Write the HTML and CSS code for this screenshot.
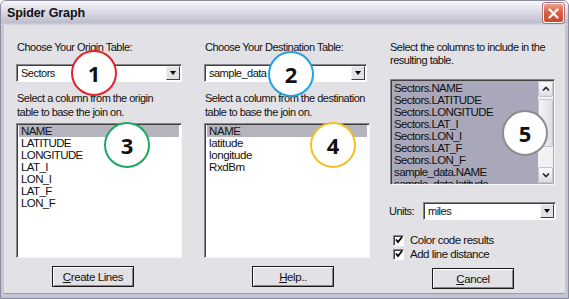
FILE: index.html
```html
<!DOCTYPE html>
<html lang="en">
<head>
  <meta charset="UTF-8">
  <title>Spider Graph</title>
  <link rel="stylesheet" href="styles.css">
</head>
<body>

  <div class="window">
    <!-- Barra de título -->
    <div class="titlebar">
      <span class="title">Spider Graph</span>
      <span class="close">
        <svg width="11" height="11" viewBox="0 0 11 11"><path d="M1.5 1.5 L9.5 9.5 M9.5 1.5 L1.5 9.5" stroke="#fff" stroke-width="2.2" stroke-linecap="round"/></svg>
      </span>
    </div>

    <div class="content">
      <!-- Tabela de origem -->
      <div class="col col-origin">
        <div class="label">Choose Your Origin Table:</div>
        <div class="combo"><span>Sectors</span><span class="drop"></span></div>
        <div class="desc">Select a column from the origin<br>table to base the join on.</div>
        <div class="listbox">
          <div class="item selected">NAME</div>
          <div class="item">LATITUDE</div>
          <div class="item">LONGITUDE</div>
          <div class="item">LAT_I</div>
          <div class="item">LON_I</div>
          <div class="item">LAT_F</div>
          <div class="item">LON_F</div>
        </div>
        <button class="btn btn-create"><u>C</u>reate Lines</button>
      </div>

      <!-- Tabela de destino -->
      <div class="col col-dest">
        <div class="label">Choose Your Destination Table:</div>
        <div class="combo combo-dest"><span>sample_data</span><span class="drop"></span></div>
        <div class="desc">Select a column from the destination<br>table to base the join on.</div>
        <div class="listbox">
          <div class="item selected">NAME</div>
          <div class="item">latitude</div>
          <div class="item">longitude</div>
          <div class="item">RxdBm</div>
        </div>
        <button class="btn btn-help"><u>H</u>elp..</button>
      </div>

      <!-- Colunas do resultado -->
      <div class="col col-result">
        <div class="label two">Select the columns to include in the<br>resulting table.</div>
        <div class="listbox multi">
          <div class="items">
            <div class="item">Sectors.NAME</div>
            <div class="item">Sectors.LATITUDE</div>
            <div class="item">Sectors.LONGITUDE</div>
            <div class="item">Sectors.LAT_I</div>
            <div class="item">Sectors.LON_I</div>
            <div class="item">Sectors.LAT_F</div>
            <div class="item">Sectors.LON_F</div>
            <div class="item">sample_data.NAME</div>
            <div class="item">sample_data.latitude</div>
          </div>
          <div class="scrollbar">
            <span class="sb-btn">
              <svg width="8" height="6" viewBox="0 0 8 6"><path d="M1 4.5 L4 1.5 L7 4.5" fill="none" stroke="#222" stroke-width="1.6"/></svg>
            </span>
            <span class="sb-track"><span class="sb-thumb"></span></span>
            <span class="sb-btn">
              <svg width="8" height="6" viewBox="0 0 8 6"><path d="M1 1.5 L4 4.5 L7 1.5" fill="none" stroke="#222" stroke-width="1.6"/></svg>
            </span>
          </div>
        </div>
        <div class="units">
          <span>Units:</span>
          <div class="combo combo-units"><span>miles</span><span class="drop"></span></div>
        </div>
        <div class="checks">
          <label class="check"><span class="box"><svg width="8" height="8" viewBox="0 0 8 8"><path d="M1 3.5 L3 6 L7 1" fill="none" stroke="#000" stroke-width="1.8"/></svg></span>Color code results</label>
          <label class="check"><span class="box"><svg width="8" height="8" viewBox="0 0 8 8"><path d="M1 3.5 L3 6 L7 1" fill="none" stroke="#000" stroke-width="1.8"/></svg></span>Add line distance</label>
        </div>
        <button class="btn btn-cancel"><u>C</u>ancel</button>
      </div>
    </div>

    <!-- Marcadores numerados -->
    <div class="marker m1">1</div>
    <div class="marker m2">2</div>
    <div class="marker m3">3</div>
    <div class="marker m4">4</div>
    <div class="marker m5">5</div>
  </div>

</body>
</html>
```

FILE: styles.css
```css
/* Geral */
body {
  margin: 0;
  background: #fff;
  font-family: 'Liberation Sans', Arial, sans-serif;
}

.window {
  position: relative;
  width: 569px;
  height: 299px;
  box-sizing: border-box;
  background: #c4c4d2;
  border: 1px solid #8a8aa0;
  border-radius: 6px 6px 0 0;
  overflow: hidden;
}

/* Barra de título */
.titlebar {
  height: 24px;
  display: flex;
  align-items: center;
  justify-content: space-between;
  padding: 0 4px 0 6px;
  background: linear-gradient(#fbfbfd, #e6e6ee 25%, #cfcfdc 65%, #bdbdcd 90%, #d8d8e2);
}

.title {
  font-weight: bold;
  font-size: 12.5px;
  color: #111;
  letter-spacing: -0.1px;
}

.close {
  width: 21px;
  height: 20px;
  box-sizing: border-box;
  border: 1px solid #fff;
  border-radius: 3px;
  background: linear-gradient(#eea08e, #d8624a 45%, #c64a30);
  display: flex;
  align-items: center;
  justify-content: center;
  box-shadow: 0 0 0 1px #b0707a;
}

/* Área do diálogo */
.content {
  height: 269px;
  margin: 0 3px 4px 3px;
  box-sizing: border-box;
  background: #e2e1e6;
  padding: 16px 0 0 12px;
  display: flex;
  font-size: 11px;
  letter-spacing: -0.5px;
  color: #111;
  border-bottom: 1px solid #9a9aae;
}

.col {
  display: flex;
  flex-direction: column;
  width: 166px;
}

.col-dest {
  margin-left: 22px;
}

.col-result {
  margin-left: 18px;
  width: 168px;
}

.label {
  line-height: 13px;
  padding-left: 1px;
}

.label.two {
  padding-left: 2px;
}

.desc {
  margin-top: 9px;
  line-height: 14px;
  padding-left: 1px;
}

/* Combos */
.combo {
  margin-top: 10px;
  height: 18px;
  box-sizing: border-box;
  background: #fff;
  border: 1px solid;
  border-color: #86858b #fff #fff #86858b;
  box-shadow: inset 1px 1px 0 #404040;
  display: flex;
  align-items: center;
  justify-content: space-between;
  padding: 0 1px 0 4px;
}

.combo-dest {
  width: 163px;
}

.drop {
  width: 14px;
  height: 14px;
  box-sizing: border-box;
  background: #e2e1e6;
  border: 1px solid;
  border-color: #f4f4f6 #404040 #404040 #f4f4f6;
  position: relative;
}

.drop::after {
  content: '';
  position: absolute;
  left: 3px;
  top: 4px;
  border-left: 3.5px solid transparent;
  border-right: 3.5px solid transparent;
  border-top: 4px solid #000;
}

/* Listas */
.listbox {
  margin-top: 4px;
  height: 135px;
  box-sizing: border-box;
  background: #fff;
  border: 1px solid;
  border-color: #86858b #f6f6f8 #f6f6f8 #86858b;
  box-shadow: inset 1px 1px 0 #404040;
  padding: 1px 0 0 2px;
  font-size: 11.5px;
  letter-spacing: -0.6px;
}

.col-dest .listbox {
  letter-spacing: -0.4px;
}

.item {
  line-height: 12px;
  padding-left: 2px;
  white-space: nowrap;
}

.item.selected {
  background: #b5b4bd;
  margin-right: 2px;
}

.listbox.multi {
  margin: 12px 0 0 2px;
  width: 165px;
  height: 106px;
  background: #a8a8ba;
  display: flex;
  padding: 1px 0 0 1px;
  overflow: hidden;
}

.items {
  flex: 1;
  padding-top: 1px;
  overflow: hidden;
}

.scrollbar {
  width: 15px;
  display: flex;
  flex-direction: column;
  background: #f2f2f4;
  margin: 0 1px 1px 0;
}

.sb-btn {
  height: 14px;
  display: flex;
  align-items: center;
  justify-content: center;
  background: linear-gradient(#fbfbfd, #dcdce4);
  border: 1px solid #c4c4d0;
  border-radius: 2px;
}

.sb-track {
  flex: 1;
  padding: 2px 0;
  display: flex;
}

.sb-thumb {
  display: block;
  width: 100%;
  height: 48px;
  box-sizing: border-box;
  background: linear-gradient(90deg, #f4f4f8, #dedee6);
  border: 1px solid #c4c4d0;
  border-radius: 2px;
}

/* Unidades */
.units {
  margin-top: 17px;
  display: flex;
  align-items: center;
  justify-content: space-between;
}

.units span {
  padding-left: 1px;
}

.combo-units {
  margin-top: 0;
  width: 133px;
  padding-left: 3px;
}

/* Caixas de seleção */
.checks {
  margin-top: 13px;
  display: flex;
  flex-direction: column;
}

.check {
  height: 14px;
  display: flex;
  align-items: center;
  padding-left: 5px;
  font-size: 11.5px;
}

.box {
  width: 11px;
  height: 11px;
  box-sizing: border-box;
  background: #fff;
  border: 1px solid;
  border-color: #86858b #fff #fff #86858b;
  box-shadow: inset 1px 1px 0 #404040;
  display: flex;
  align-items: center;
  justify-content: center;
  margin-right: 6px;
}

/* Botões */
.btn {
  margin-top: 8px;
  width: 82px;
  height: 21px;
  font-family: inherit;
  font-size: 11.5px;
  letter-spacing: -0.4px;
  color: #111;
  background: #e2e1e6;
  border: 1px solid #1a1a1a;
  box-shadow: inset 1px 1px 0 #fff, inset -1px -1px 0 #86858b;
  padding: 0;
}

.btn-create {
  margin-left: 36px;
}

.btn-help {
  margin-left: 48px;
}

.btn-cancel {
  margin-top: 7px;
  margin-left: 44px;
}

/* Marcadores numerados */
.marker {
  position: absolute;
  width: 46px;
  height: 46px;
  box-sizing: border-box;
  border-radius: 50%;
  background: #fff;
  border: 2px solid;
  display: flex;
  align-items: center;
  justify-content: center;
  font-family: 'Open Sans', sans-serif;
  font-weight: bold;
  font-size: 22px;
  color: #111;
}

.m1 { left: 70px; top: 49px; border-color: #e0242c; }
.m2 { left: 267px; top: 50px; border-color: #22a2da; }
.m3 { left: 103px; top: 121px; border-color: #1ea862; }
.m4 { left: 309px; top: 121px; border-color: #f0c228; }
.m5 { left: 501px; top: 109px; border-color: #8c8c8c; }
```
